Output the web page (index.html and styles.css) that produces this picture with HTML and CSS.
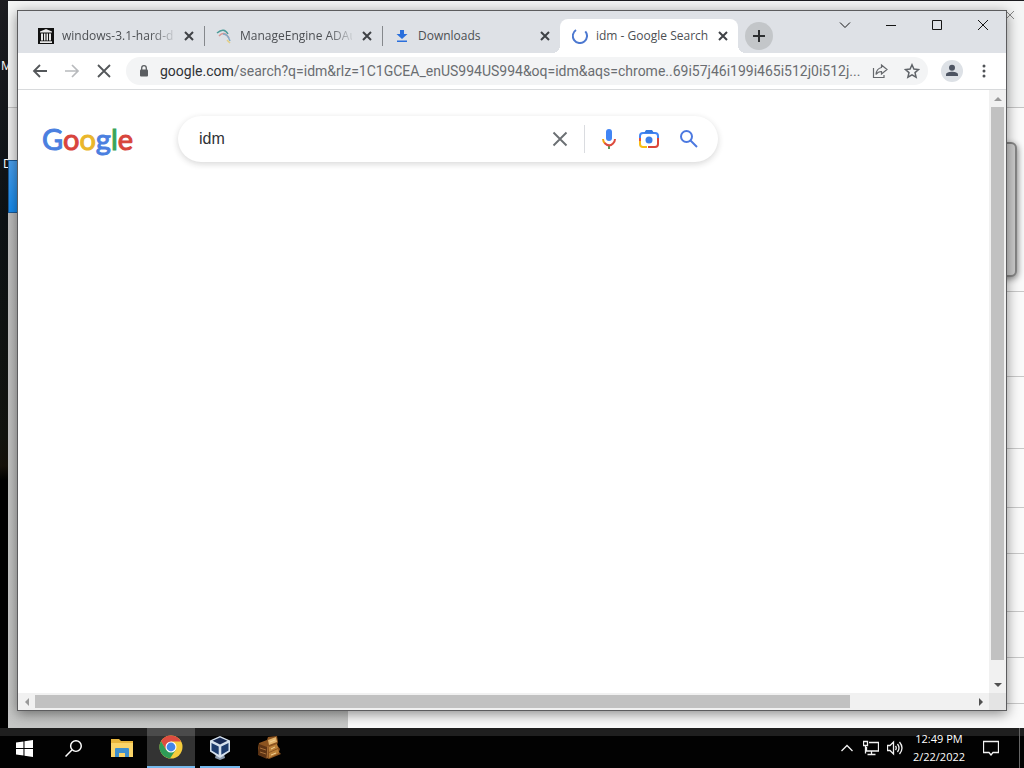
FILE: index.html
```html
<!DOCTYPE html>
<html lang="en">
<head>
<meta charset="utf-8">
<title>idm - Google Search</title>
<link rel="stylesheet" href="styles.css">
</head>
<body>
<main class="desktop">
  <span class="desk-label desk-label-top">M</span>
  <span class="desk-label desk-label-low">D</span>

  <section class="back-window" aria-label="Background window">
    <div class="back-header"><svg class="back-close" viewBox="0 0 10 10"><path d="M1 1l8 8M9 1L1 9" stroke="#888" fill="none"/></svg></div>
    <div class="back-body">
      <div class="back-side"><div class="back-selected"></div></div>
      <div class="back-list">
        <div class="row-a"></div><div class="row-b"></div><div class="row-c"></div><div class="row-d"></div><div class="row-e"></div><div class="row-f"></div><div class="row-e"></div><div class="row-e"></div><div class="row-last"></div>
      </div>
    </div>
    <div class="back-panel"></div>
  </section>

  <section class="browser" aria-label="Browser">
    <header class="tabstrip">
      <div class="tab">
        <svg class="fav" viewBox="0 0 16 16"><rect width="16" height="16" fill="#111"/><path d="M8 1l6 2.500v1H2v-1zM3 5.500h2v7H3zM6 5.500h1.500v7H6zM8.500 5.500H10v7H8.500zM11 5.500h2v7h-2zM2 13.300h12V15H2z" fill="#e8e8e8"/></svg>
        <span class="tab-title fade">windows-3.1-hard-di</span>
        <button class="tab-close" aria-label="Close tab"><svg viewBox="0 0 10 10"><path d="M1 1l8 8M9 1L1 9"/></svg></button>
      </div>
      <div class="tab divided">
        <svg class="fav" viewBox="0 0 16 16" fill="none" stroke-width="1.500"><path d="M1 5Q8-1 12 6" stroke="#4b9a98"/><path d="M3 8Q8 2 13 10" stroke="#d99793"/><path d="M7 6Q12 6 14 13" stroke="#83abc9"/><path d="M11 12l3 3" stroke="#e5cf83"/></svg>
        <span class="tab-title fade">ManageEngine ADAu</span>
        <button class="tab-close" aria-label="Close tab"><svg viewBox="0 0 10 10"><path d="M1 1l8 8M9 1L1 9"/></svg></button>
      </div>
      <div class="tab divided">
        <svg class="fav" viewBox="0 0 16 16"><path d="M6 2h4v4h3.500L8 11 2.500 6H6zM3 12.500h10V14H3z" fill="#2a6fdc"/></svg>
        <span class="tab-title">Downloads</span>
        <button class="tab-close" aria-label="Close tab"><svg viewBox="0 0 10 10"><path d="M1 1l8 8M9 1L1 9"/></svg></button>
      </div>
      <div class="tab active">
        <svg class="fav" viewBox="0 0 16 16"><path d="M4 2A7.100 7.100 0 1 0 13.300 3.300" fill="none" stroke="#4c78d0" stroke-width="2"/></svg>
        <span class="tab-title">idm - Google Search</span>
        <button class="tab-close" aria-label="Close tab"><svg viewBox="0 0 10 10"><path d="M1 1l8 8M9 1L1 9"/></svg></button>
      </div>
      <button class="new-tab" aria-label="New tab"><svg viewBox="0 0 12 12"><path d="M6 0v12M0 6h12" stroke="#2d2f31" stroke-width="2"/></svg></button>
      <div class="win-buttons">
        <button aria-label="Search tabs"><svg viewBox="0 0 12 12"><path d="M1 3.500l5 5 5-5"/></svg></button>
        <button aria-label="Minimize"><svg viewBox="0 0 12 12"><path d="M1 6.500h10"/></svg></button>
        <button aria-label="Maximize"><svg viewBox="0 0 12 12"><path d="M1.500 1.500h9v9h-9z"/></svg></button>
        <button aria-label="Close"><svg viewBox="0 0 12 12"><path d="M1 1l10 10M11 1L1 11"/></svg></button>
      </div>
    </header>

    <nav class="toolbar">
      <button class="tool" aria-label="Back"><svg viewBox="0 0 16 16"><path d="M15 8H2M8 2L2 8l6 6" stroke="#54575a" stroke-width="1.800" fill="none"/></svg></button>
      <button class="tool" aria-label="Forward"><svg viewBox="0 0 16 16"><path d="M1 8h13M8 2l6 6-6 6" stroke="#b8babd" stroke-width="1.700" fill="none"/></svg></button>
      <button class="tool" aria-label="Stop"><svg viewBox="0 0 16 16"><path d="M2 2l12 12M14 2L2 14" stroke="#54575a" stroke-width="1.800" fill="none"/></svg></button>
      <div class="omnibox">
        <svg class="lock" viewBox="0 0 10 12"><rect x="1" y="4.500" width="8" height="7" rx="1" fill="#5a5d61"/><path d="M2.700 5V3a2.300 2.300 0 0 1 4.600 0v2" fill="none" stroke="#5a5d61" stroke-width="1.300"/></svg>
        <span class="url"><b>google.com</b>/search?q=idm&amp;rlz=1C1GCEA_enUS994US994&amp;oq=idm&amp;aqs=chrome..69i57j46i199i465i512j0i512j...</span>
        <button class="tool" aria-label="Share"><svg viewBox="0 0 16 16"><path d="M1.500 5v9.500H12V12M9.500 2L15 6.500 9.500 11V8.500Q6 8.500 4 11.500 4.500 5.500 9.500 4.500z" stroke="#65686c" stroke-width="1.200" fill="none"/></svg></button>
        <button class="tool" aria-label="Bookmark"><svg viewBox="0 0 16 16"><path d="M8 1.800l1.900 4.300 4.600.400-3.500 3.100 1.100 4.600L8 11.800l-4.100 2.400L5 9.600 1.500 6.500l4.600-.400z" stroke="#5f6368" stroke-width="1.500" fill="none"/></svg></button>
      </div>
      <button class="tool avatar" aria-label="Profile"><svg viewBox="0 0 22 22"><circle cx="11" cy="11" r="11" fill="#dde1e6"/><circle cx="11" cy="7.700" r="3" fill="#4d5462"/><path d="M5 16v-1.500C5 12.500 8.500 11.700 11 11.700s6 .800 6 2.800V16z" fill="#4d5462"/></svg></button>
      <button class="tool" aria-label="Menu"><svg viewBox="0 0 16 16" fill="#505357"><circle cx="8" cy="3" r="1.500"/><circle cx="8" cy="8" r="1.500"/><circle cx="8" cy="13" r="1.500"/></svg></button>
    </nav>

    <div class="viewport">
      <div class="page">
        <a class="logo" href="#" aria-label="Google"><span class="c-blue">G</span><span class="c-red">o</span><span class="c-yellow">o</span><span class="c-blue">g</span><span class="c-green">l</span><span class="c-red">e</span></a>
        <form class="search">
          <input type="text" value="idm" aria-label="Search">
          <button type="reset" aria-label="Clear"><svg viewBox="0 0 20 20"><path d="M3.500 3.500l13 13M16.500 3.500l-13 13" stroke="#6b6f73" stroke-width="1.900"/></svg></button>
          <span class="divider"></span>
          <button type="button" aria-label="Search by voice"><svg viewBox="0 0 20 20" fill="none"><rect x="7" y="0" width="6" height="12" rx="3" fill="#4285f4"/><path d="M10 16v4" stroke="#5a9a5c" stroke-width="2"/><path d="M4 10q.2 3 2 4.500" stroke="#f2a60d" stroke-width="2"/><path d="M5.500 14Q10 18.500 14 14.500q2-1.800 2-4.500" stroke="#dd4b3e" stroke-width="2"/></svg></button>
          <button type="button" aria-label="Search by image"><svg viewBox="0 0 20 20" fill="none" stroke-width="2"><path d="M1 9V7q0-3 3-3h12q3 0 3 3v3" stroke="#4285f4"/><path d="M5 4l2-3h6l2 3z" fill="#3779df"/><path d="M1 12v3q0 3 3 3h4" stroke="#f9bd13"/><path d="M19 9v6q0 3-3 3H9" stroke="#dc4638"/><path d="M1 9v3" stroke="#e7523d"/><circle cx="10" cy="11" r="3.500" fill="#3d7fe8"/></svg></button>
          <button type="submit" aria-label="Search"><svg viewBox="0 0 20 20" fill="none" stroke="#4c79e0" stroke-width="2"><circle cx="7.500" cy="7.500" r="5.500"/><path d="M11.500 11.500l6.500 6.500"/></svg></button>
        </form>
      </div>
      <div class="vscroll"><i class="arrow up"></i><i class="vthumb"></i><i class="arrow down"></i></div>
      <div class="hscroll"><i class="arrow left"></i><div class="htrack"><i class="hthumb"></i></div><i class="arrow right"></i></div>
      <div class="corner"></div>
    </div>
  </section>
</main>

<footer class="taskbar">
  <button class="task" aria-label="Start"><svg viewBox="0 0 16 16" class="s16"><path d="M0 2.300L7 1.300V7.500H0zM8 1.100L16 0v7.500H8zM0 8.500h7v6.200l-7-1zM8 8.500h8V16l-8-1.100z" fill="#fff"/></svg></button>
  <button class="task" aria-label="Search"><svg viewBox="0 0 16 16" class="s16" fill="none" stroke="#fff" stroke-width="1.400"><circle cx="10.300" cy="5.700" r="5"/><path d="M6.500 9.500L.5 15.500"/></svg></button>
  <button class="task" aria-label="File Explorer"><svg viewBox="0 0 24 24"><path d="M1 3h8l2 2h12v16H1z" fill="#e7b53c"/><path d="M1 7h22v14H1z" fill="#fad468"/><path d="M5 21v-8q0-1 1-1h12q1 0 1 1v8h-4v-4H9v4z" fill="#3e8fcd"/></svg></button>
  <button class="task current" aria-label="Google Chrome"><svg viewBox="0 0 24 24"><circle cx="12" cy="12" r="11.500" fill="#f5cc3c"/><path d="M2 6.200A11.500 11.500 0 0 1 22 6.500H12L7 15z" fill="#dd4c40"/><path d="M2 6.200A11.500 11.500 0 0 0 11 23.450L16.800 14.700 12 17 7 14.800z" fill="#2f9d57"/><circle cx="12" cy="12" r="5.500" fill="#fff"/><circle cx="12" cy="12" r="4.400" fill="#4385e8"/></svg></button>
  <button class="task open" aria-label="VirtualBox"><svg viewBox="0 0 24 24"><path d="M8 18h8l1 4-5 2-5-2z" fill="#8d9bad"/><path d="M12 0l10 4.500v11L12 22 2 15.500v-11z" fill="#d5e1ed"/><path d="M12 1.500l7.500 3.300L12 8.500 4.500 4.800z" fill="#182b55"/><path d="M3.500 7l7.200 3.600v8.200L3.500 14.500zM20.500 7l-7.200 3.600v8.200l7.200-4.300z" fill="#1d3c6d"/></svg></button>
  <button class="task" aria-label="File tool"><svg viewBox="0 0 24 24"><path d="M2 7l8-3 1-3 9-1 1 6-1 3 3 4-1 3 2 2-12 5-10-4-1-7z" fill="#8c5420"/><path d="M2 8l8 3v12L1 19z" fill="#5e3414"/><path d="M11 4l8-3 1 5-8 3z" fill="#e3b46d"/><path d="M12 11l8-3 1 4-9 4zM12 17l9-4 1 4-10 5z" fill="#bc8139"/><path d="M13 6l5-2M14 13l4-2M14 19l5-2" stroke="#f2d093"/><path d="M11 10l-1 12M3 12l6 2M3 16l6 2" stroke="#a8703a" fill="none"/></svg></button>
  <div class="tray">
    <button class="tray-icon" aria-label="Show hidden icons"><svg viewBox="0 0 16 16"><path d="M2.500 11L8 5.500l5.500 5.500"/></svg></button>
    <button class="tray-icon" aria-label="Network"><svg viewBox="0 0 16 16"><path d="M6 2.500h9.500v8.500H3.500V7M8.500 11v3.500M4.500 14.500h8M.5 1.500h4v4h-4zM2.500 5.500v8"/></svg></button>
    <button class="tray-icon" aria-label="Volume"><svg viewBox="0 0 16 16"><path d="M.5 5.500H3L6.500 2v12L3 10.500H.5zM8.500 6q1.500 2 0 4M10.500 4q3 4 0 8M12.500 2q5 6 0 12"/></svg></button>
    <time class="clock"><span>12:49 PM</span><span>2/22/2022</span></time>
    <button class="tray-icon notice" aria-label="Notifications"><svg viewBox="0 0 16 16"><path d="M.5 1.500h15v11H10L8 15l-2-2.500H.5z"/></svg></button>
  </div>
</footer>
</body>
</html>
```
FILE: styles.css
```css
* { box-sizing: border-box; }
html, body { height: 100%; margin: 0; }
body {
  display: grid;
  grid-template-rows: minmax(0, 1fr) 40px;
  overflow: hidden;
  background: #000;
  font-family: "Open Sans", "Noto Sans", sans-serif;
}
button { border: 0; padding: 0; margin: 0; background: none; display: flex; align-items: center; justify-content: center; flex: none; font: inherit; }
svg { display: block; flex: none; }

.desktop { position: relative; overflow: hidden; background: linear-gradient(#1c1c20, #0d1215 30%, #12140f 60%, #15110a 64%, #000 66%); }
.desk-label { position: absolute; left: 1px; color: #fff; font-size: 12px; line-height: 16px; }
.desk-label-top { top: 58px; }
.desk-label-low { top: 156px; left: 3px; }

.back-window { position: absolute; inset: 1px 0 0 8px; display: flex; flex-direction: column; background: #fafafa; }
.back-header { height: 107px; border-bottom: 1px solid #c4c4c4; display: flex; justify-content: flex-end; padding: 9px 9px; background: #f4f5f5; }
.back-close { width: 10px; height: 10px; }
.back-body { flex: 1; display: flex; min-height: 0; }
.back-side { width: 340px; padding-top: 52px; background: linear-gradient(#eee 52px, #bcbcbc 52px, #c6c7c6); }
.back-selected { height: 53px; border: 1px solid #1a5a98; background: linear-gradient(#4ba0ee, #168df0); }
.back-list { flex: 1; }
.back-list > div { border-bottom: 1px solid #c8c8c8; }
.row-a { height: 184px; }
.row-b { height: 85px; }
.row-c { height: 72px; }
.row-d { height: 59px; }
.row-e { height: 46px; }
.row-f { height: 58px; }
.back-list > .row-last { border: 0; }
.back-panel { position: absolute; right: 7px; top: 141px; width: 60px; height: 135px; border: 2px solid #858585; border-radius: 6px; background: #ccc; box-shadow: 1px 2px 6px #888; }

.browser { position: absolute; inset: 10px 17px 17px 17px; display: flex; flex-direction: column; border: 1px solid #5c5c5e; background: #fff; box-shadow: 0 3px 12px rgba(0, 0, 0, .45); }
.tabstrip { height: 42px; flex: none; display: flex; align-items: flex-end; padding-left: 8px; background: #dee1e6; }
.tab { position: relative; width: 178px; height: 34px; display: flex; align-items: center; gap: 8px; padding: 0 8px 0 12px; flex: 0 1 auto; }
.divided::before { content: ""; position: absolute; left: 0; top: 7px; height: 20px; width: 1px; background: #85888c; }
.fav { width: 16px; height: 16px; }
.tab-title { flex: 1; min-width: 0; white-space: nowrap; font-size: 12px; line-height: 16px; color: #4c4f53; }
.fade { -webkit-mask-image: linear-gradient(90deg, #000 88px, transparent 116px); mask-image: linear-gradient(90deg, #000 88px, transparent 116px); }
.tab-close { width: 14px; height: 16px; }
.tab-close svg { width: 10px; height: 10px; fill: none; stroke: #3f4246; stroke-width: 2; }
.active { background: #fff; border-radius: 8px 8px 0 0; }
.active::before, .active::after { content: ""; position: absolute; bottom: 0; width: 8px; height: 8px; }
.active::before { left: -8px; background: radial-gradient(circle at 0 0, transparent 8px, #fff 8px); }
.active::after { right: -8px; background: radial-gradient(circle at 100% 0, transparent 8px, #fff 8px); }
.new-tab { width: 28px; height: 28px; margin: 0 0 3px 7px; border-radius: 50%; background: #c3c6c9; }
.new-tab svg { width: 12px; height: 12px; }
.win-buttons { display: flex; margin-left: auto; align-self: flex-start; }
.win-buttons button { width: 46px; height: 28px; }
.win-buttons svg { width: 12px; height: 12px; fill: none; stroke: #151515; stroke-width: 1; }

.toolbar { height: 37px; flex: none; display: flex; align-items: center; padding: 0 6px; border-bottom: 1px solid #d8dadc; }
.tool { width: 32px; height: 28px; }
.tool svg { width: 16px; height: 16px; }
.avatar svg { width: 22px; height: 22px; }
.omnibox { flex: 1; min-width: 0; height: 28px; display: flex; align-items: center; margin: 0 8px 0 6px; padding-left: 13px; border-radius: 14px; background: #f3f4f5; }
.lock { width: 10px; height: 12px; margin-right: 11px; }
.url { flex: 1; min-width: 0; overflow: hidden; white-space: nowrap; font-family: Roboto, sans-serif; font-size: 14px; line-height: 20px; color: #6a6d71; }
.url b { font-weight: 400; color: #303236; }

.viewport { flex: 1; min-height: 0; display: grid; grid-template: minmax(0, 1fr) 17px / minmax(0, 1fr) 17px; }
.page { display: flex; align-items: flex-start; padding: 26px 24px; overflow: hidden; }
.logo { width: 136px; flex: none; font-family: Lato, sans-serif; font-size: 29px; line-height: 46px; font-weight: 400; -webkit-text-stroke: 1px currentColor; text-decoration: none; }
.c-blue { color: #4a7fe0; -webkit-text-stroke-color: #4a7fe0; }
.c-red { color: #d8443c; -webkit-text-stroke-color: #d8443c; }
.c-yellow { color: #eab62a; -webkit-text-stroke-color: #eab62a; }
.c-green { color: #3aa45a; -webkit-text-stroke-color: #3aa45a; }
.search { flex: 0 1 540px; height: 46px; display: flex; align-items: center; padding: 0 9px 0 21px; border-radius: 23px; background: #fff; box-shadow: 0 2px 6px rgba(32, 33, 36, .18); }
.search input { flex: 1; min-width: 0; padding: 0; border: 0; outline: 0; background: none; color: #303236; font: 16px/24px "Liberation Sans", sans-serif; }
.search button { width: 40px; height: 40px; }
.search svg { width: 20px; height: 20px; }
.divider { width: 1px; height: 28px; margin: 0 4px; background: #dadce0; }

.vscroll { display: flex; flex-direction: column; align-items: center; background: #f1f1f1; }
.vthumb { flex: none; width: 13px; height: calc(100% - 50px); background: #c1c1c1; }
.hscroll { display: flex; align-items: center; background: #f1f1f1; }
.htrack { flex: 1; }
.hthumb { display: block; width: 87%; height: 13px; background: #c1c1c1; }
.corner { background: #e4e4e4; }
.arrow { flex: none; width: 17px; height: 17px; display: flex; align-items: center; justify-content: center; }
.arrow::before { content: ""; border: 4px solid transparent; }
.down { margin-top: auto; }
.up::before { border-top: 0; border-bottom-color: #999; }
.down::before { border-bottom: 0; border-top-color: #505050; }
.left::before { border-left: 0; border-right-color: #999; }
.right::before { border-right: 0; border-left-color: #505050; }

.taskbar { display: flex; gap: 1px; background: linear-gradient(#1f1f1f 8px, #020202 8px); }
.task { width: 48px; height: 40px; }
.task svg { width: 24px; height: 24px; }
.task .s16 { width: 17px; height: 17px; }
.current { background: linear-gradient(#4b4b4b 8px, #333 8px); border-bottom: 2px solid #76b9ed; }
.open { background: linear-gradient(#76b9ed, #76b9ed) center bottom / 40px 2px no-repeat; }
.tray { display: flex; align-items: center; margin-left: auto; padding-right: 4px; }
.tray-icon { width: 24px; height: 40px; }
.tray-icon svg { width: 16px; height: 16px; fill: none; stroke: #f2f2f2; stroke-width: 1.3; }
.clock { width: 64px; display: flex; flex-direction: column; align-items: center; color: #fff; font-size: 11px; line-height: 18px; white-space: nowrap; }
.notice { width: 49px; padding-right: 8px; border-right: 1px solid #666; }
```
